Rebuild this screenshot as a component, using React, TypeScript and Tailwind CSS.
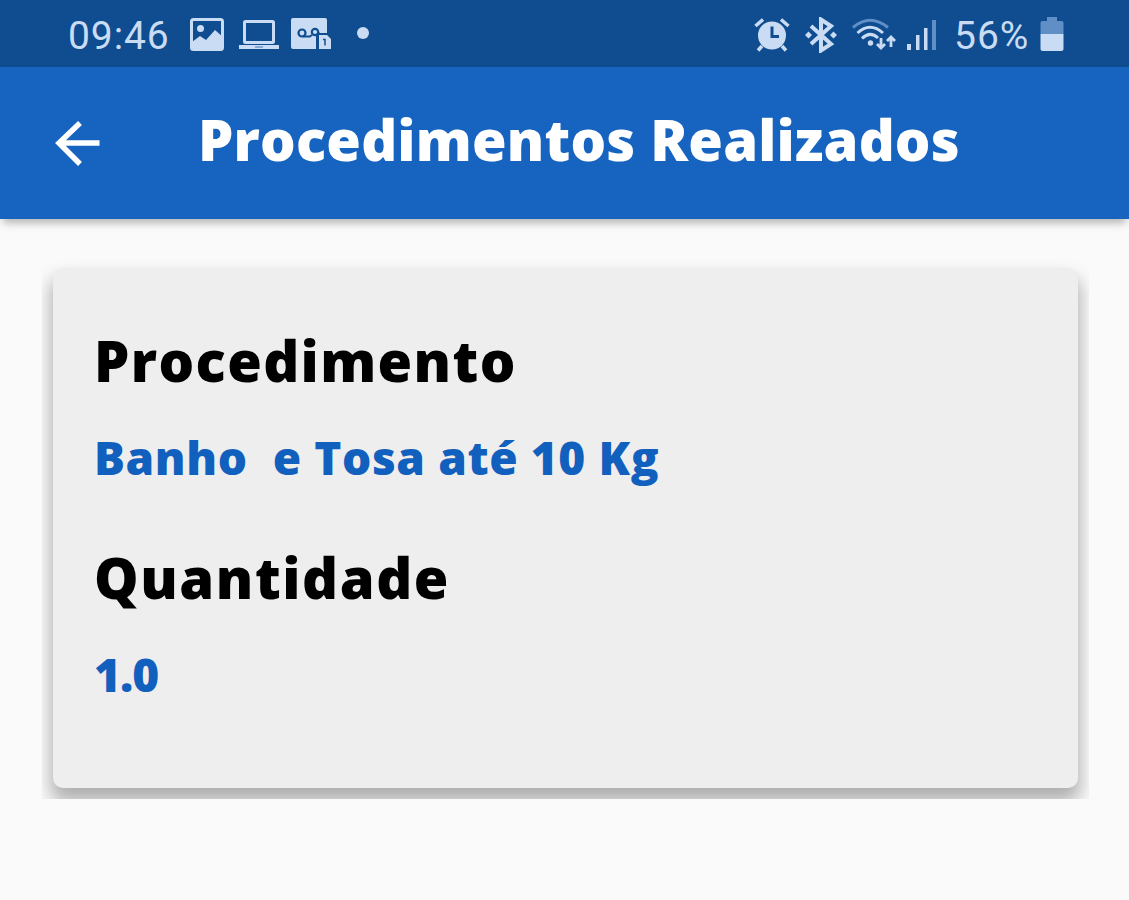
const fields = [
  {
    label: "Procedimento",
    value: "Banho  e Tosa até 10 Kg",
    labelClass: "tracking-[1.4px]",
    valueClass: "tracking-[0.6px]",
  },
  {
    label: "Quantidade",
    value: "1.0",
    labelClass: "tracking-[1.6px]",
    valueClass: "tracking-[-1px]",
  },
];

function ImageIcon() {
  return (
    <svg width="34" height="34" viewBox="0 0 34 34" fill="none">
      <rect x="1.5" y="1.5" width="31" height="30" rx="2" stroke="currentColor" strokeWidth="3" />
      <circle cx="10.5" cy="10.5" r="3.5" fill="currentColor" />
      <path d="M2 24l8-6 6 4 9-10 8 7v12H2z" fill="currentColor" />
    </svg>
  );
}

function LaptopIcon() {
  return (
    <svg width="40" height="32" viewBox="0 0 40 32" fill="none">
      <rect x="5.5" y="2.5" width="29" height="21" rx="1" stroke="currentColor" strokeWidth="3" />
      <path d="M0 26h40v4H0z" fill="currentColor" />
      <path d="M16 28h8" stroke="#6f9aca" strokeWidth="1.5" />
    </svg>
  );
}

function VoicemailIcon() {
  return (
    <svg width="40" height="33" viewBox="0 0 40 33" fill="none">
      <rect x="0" y="0" width="36" height="31" rx="2" fill="currentColor" />
      <circle cx="11" cy="15" r="3.5" stroke="#0f4d90" strokeWidth="2.2" />
      <circle cx="24" cy="14" r="3.2" stroke="#0f4d90" strokeWidth="2.2" />
      <path d="M12 18.5h7M21 17l-3 2M27 17l2-2" stroke="#0f4d90" strokeWidth="2" />
      <path d="M25 18l2-3h13v18H25z" fill="#0f4d90" />
      <path d="M28 17h8l4 4v10H28z" fill="currentColor" />
      <path d="M32 21.500h2v6" stroke="#0f4d90" strokeWidth="1.5" />
    </svg>
  );
}

function AlarmIcon() {
  return (
    <svg width="36" height="36" viewBox="0 0 36 36" fill="none">
      <circle cx="18" cy="18.5" r="14" fill="currentColor" />
      <path d="M1.5 9L9 2.500M34.500 9L27 2.500" stroke="currentColor" strokeWidth="3.500" />
      <path d="M8 29l-4 4.500M28 29l4 4.500" stroke="currentColor" strokeWidth="3.500" />
      <path d="M18 9.500v10h7" stroke="#0f4d90" strokeWidth="3" />
    </svg>
  );
}

function BluetoothIcon() {
  return (
    <svg width="32" height="36" viewBox="0 0 32 36" fill="none">
      <path d="M6 9l20 18-10 6.500V2.500L26 9 6 27" stroke="currentColor" strokeWidth="4" />
      <path d="M3.500 14.500L7 18l-3.500 3.500L0 18zM28.500 14.500L32 18l-3.500 3.500L25 18z" fill="currentColor" />
    </svg>
  );
}

function WifiIcon() {
  return (
    <svg width="44" height="34" viewBox="0 0 44 34" fill="none">
      <path d="M1 9.500Q18-5 36 9.500" stroke="#5f8fc5" strokeWidth="3" />
      <path d="M5.500 15Q18 3.500 31 15" stroke="currentColor" strokeWidth="3" />
      <path d="M10 20.500Q18 12.500 26 20" stroke="currentColor" strokeWidth="3" />
      <circle cx="18.500" cy="25" r="2.700" fill="currentColor" />
      <path d="M29 20v9M25 26l4 4 4-4M39 29v-9M35 23l4-4 4 4" stroke="currentColor" strokeWidth="2.800" />
    </svg>
  );
}

function SignalIcon() {
  return (
    <svg width="30" height="32" viewBox="0 0 30 32">
      <path d="M0 25h4v6H0zM9 16h3.500v15H9zM17 9h3.500v22H17z" fill="currentColor" />
      <path d="M25 1h4v30h-4z" fill="#5f8fc5" />
    </svg>
  );
}

function BatteryIcon() {
  return (
    <svg width="24" height="35" viewBox="0 0 24 35">
      <path d="M7 0h10v4h5.500l1 1.500V17H.5V5.500L1.500 4H7z" fill="#5f8fc5" />
      <path d="M.5 17h23v15q0 2-2 2h-19q-2 0-2-2z" fill="currentColor" />
    </svg>
  );
}

function StatusBar() {
  return (
    <div className="flex h-[67px] items-center bg-[#0f4d90] pl-[68px] pr-[65px] pt-0.5 font-[Roboto,sans-serif] text-[39px] font-normal text-[#c9dcf3]">
      <span className="w-[122px] whitespace-nowrap pt-1 tracking-[0.9px]">09:46</span>
      <ImageIcon />
      <div className="ml-[15px]">
        <LaptopIcon />
      </div>
      <div className="ml-3">
        <VoicemailIcon />
      </div>
      <span className="ml-[26px] mb-1 size-3 rounded-full bg-current" />
      <div className="ml-auto flex items-center">
        <AlarmIcon />
        <div className="ml-[15px]">
          <BluetoothIcon />
        </div>
        <div className="ml-[15px]">
          <WifiIcon />
        </div>
        <div className="ml-[11px]">
          <SignalIcon />
        </div>
        <span className="ml-[17px] w-[86px] whitespace-nowrap pt-1 tracking-[1px]">56%</span>
        <BatteryIcon />
      </div>
    </div>
  );
}

function AppBar() {
  return (
    <header className="flex h-[152px] items-center bg-[#1764c0] pl-[55px] shadow-[0_7px_8px_-3px_rgba(0,0,0,0.28)]">
      <svg width="46" height="46" viewBox="0 0 46 46" fill="none">
        <path d="M44.500 23H4M25 3L4 23l21 21" stroke="white" strokeWidth="5.500" />
      </svg>
      <h1 className="ml-[97px] whitespace-nowrap pb-2 text-[56px] leading-[64px] tracking-[0.2px] text-white">
        Procedimentos Realizados
      </h1>
    </header>
  );
}

export default function App() {
  return (
    <div className="h-[900px] overflow-hidden bg-[#fafafa] font-['Open_Sans',sans-serif] font-extrabold">
      <StatusBar />
      <AppBar />
      <main className="pl-[42px] pr-10 pt-[39px]">
        {/* the card's shadow is cut off at this wrapper's edges */}
        <div className="overflow-hidden px-[11px] pb-[11px] pt-[10px]">
          <section className="h-[520px] rounded-[10px] bg-[#eeeeee] px-[41px] pt-[60px] shadow-[0_12px_18px_2px_rgba(0,0,0,0.3)]">
            {fields.map((field) => (
              <div key={field.label} className="h-[217px] whitespace-pre">
                <h2 className={`text-[56px] leading-[64px] text-black ${field.labelClass}`}>
                  {field.label}
                </h2>
                <p className={`mt-[37px] text-[46px] leading-[56px] text-[#1260bd] ${field.valueClass}`}>
                  {field.value}
                </p>
              </div>
            ))}
          </section>
        </div>
      </main>
    </div>
  );
}
